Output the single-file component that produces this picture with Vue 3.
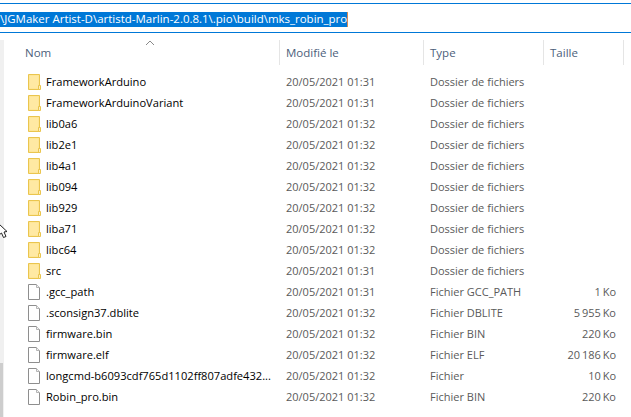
<script setup>
const folders = [
  ['FrameworkArduino', '01:31'],
  ['FrameworkArduinoVariant', '01:31'],
  ['lib0a6', '01:32'],
  ['lib2e1', '01:32'],
  ['lib4a1', '01:32'],
  ['lib094', '01:32'],
  ['lib929', '01:32'],
  ['liba71', '01:32'],
  ['libc64', '01:32'],
  ['src', '01:31'],
].map(([name, time]) => ({ name, time, type: 'Dossier de fichiers', size: '', folder: true }))

const files = [
  ['.gcc_path', '01:31', 'Fichier GCC_PATH', '1 Ko'],
  ['.sconsign37.dblite', '01:32', 'Fichier DBLITE', '5 955 Ko'],
  ['firmware.bin', '01:32', 'Fichier BIN', '220 Ko'],
  ['firmware.elf', '01:32', 'Fichier ELF', '20 186 Ko'],
  ['longcmd-b6093cdf765d1102ff807adfe432...', '01:32', 'Fichier', '10 Ko'],
  ['Robin_pro.bin', '01:32', 'Fichier BIN', '220 Ko'],
].map(([name, time, type, size]) => ({ name, time, type, size, folder: false }))

const rows = [...folders, ...files]
</script>

<template>
  <div class="window">
    <div class="address">
      <span class="selection">\JGMaker Artist-D\artistd-Marlin-2.0.8.1\.pio\build\mks_robin_pro</span><span class="caret"></span>
    </div>
    <div class="body">
      <aside class="pane">
        <div class="pane-thumb"></div>
      </aside>
      <main class="list">
        <svg class="sort" width="10" height="6" viewBox="0 0 10 6"><path d="M1 5 L5 1 L9 5" fill="none" stroke="#8a8a8a" stroke-width="1"/></svg>
        <header class="head">
          <div class="hcell c-name">Nom</div>
          <div class="hcell c-date">Modifié le</div>
          <div class="hcell c-type">Type</div>
          <div class="hcell c-size">Taille</div>
        </header>
        <div class="row" v-for="r in rows" :key="r.name">
          <div class="cell c-name name">
            <svg v-if="r.folder" class="icon" width="14" height="16" viewBox="0 0 14 16">
              <path d="M0.5 0.5 H11.5 V15.5 H0.5 Z" fill="#fde38c" stroke="#eac54e"/>
              <path d="M1.5 1.5 H10.5 V14.5 H1.5 Z" fill="#ffe9a3"/>
              <path d="M10.5 11.5 H12.5 V15.5 H10.5 Z" fill="#fdf0bd" stroke="#eac54e"/>
            </svg>
            <svg v-else class="icon" width="14" height="16" viewBox="0 0 14 16">
              <path d="M0.5 0.5 H8.5 L11.5 3.5 V15.5 H0.5 Z" fill="#fff" stroke="#8e8e8e"/>
              <path d="M8.5 0.5 V3.5 H11.5" fill="#f3f3f3" stroke="#b5b5b5"/>
            </svg>
            <span class="label">{{ r.name }}</span>
          </div>
          <div class="cell c-date meta">20/05/2021 {{ r.time }}</div>
          <div class="cell c-type meta">{{ r.type }}</div>
          <div class="cell c-size meta size">{{ r.size }}</div>
        </div>
      </main>
    </div>
    <svg class="cursor" width="9" height="14" viewBox="0 0 9 14">
      <path d="M-1 0 L7 7.5 L4 8 L6 12.5 L3.5 13.5 L1.5 9 L-1 11 Z" fill="#fff" stroke="#222" stroke-width="1"/>
    </svg>
  </div>
</template>

<style>
html, body { margin: 0; background: #fff; }
</style>

<style scoped>
.window {
  position: relative;
  width: 631px;
  height: 417px;
  overflow: hidden;
  background: #fff;
  font-family: "Open Sans", "Noto Sans", sans-serif;
  font-size: 11px;
  color: #000;
}
.address {
  box-sizing: border-box;
  margin-top: 3px;
  height: 30px;
  border-top: 1px solid #0078d7;
  border-bottom: 1px solid #0078d7;
  display: flex;
  align-items: center;
  padding-top: 2px;
  white-space: nowrap;
  font-size: 11.47px;
}
.selection {
  background: #0078d7;
  color: #fff;
  height: 15px;
  line-height: 14px;
}
.caret {
  width: 1px;
  height: 15px;
  background: #d88a50;
}
.body {
  display: flex;
  margin-top: 7px;
  height: 377px;
}
.pane {
  width: 4px;
  background: #f0f0f0;
  display: flex;
  flex-direction: column;
  justify-content: flex-end;
  flex: none;
}
.pane-thumb {
  height: 54px;
  width: 3px;
  background: #cdcdcd;
}
.list {
  position: relative;
  flex: 1;
  padding-left: 3px;
}
.sort {
  position: absolute;
  left: 141px;
  top: 0;
}
.head {
  display: flex;
  height: 25px;
  margin-bottom: 6px;
}
.hcell {
  box-sizing: border-box;
  line-height: 25px;
  font-size: 11.5px;
  color: #4c607a;
  border-right: 1px solid #e5e5e5;
  padding-left: 18px;
}
.c-name { width: 273px; flex: none; }
.c-date { width: 144px; flex: none; padding-left: 6px; }
.c-type { width: 120px; flex: none; padding-left: 6px; }
.c-size { width: 80px; flex: none; padding-left: 6px; }
.row {
  display: flex;
  height: 21px;
  align-items: center;
}
.cell { box-sizing: border-box; white-space: nowrap; }
.name {
  display: flex;
  align-items: center;
  padding-left: 21px;
  gap: 4px;
  font-size: 11.12px;
}
.icon { flex: none; }
.label { color: #000; }
.meta { color: #5a5a5a; padding-left: 6px; }
.size {
  width: 72px;
  padding: 0;
  text-align: right;
  word-spacing: -1px;
}
.cursor {
  position: absolute;
  left: 0;
  top: 224px;
}
</style>
